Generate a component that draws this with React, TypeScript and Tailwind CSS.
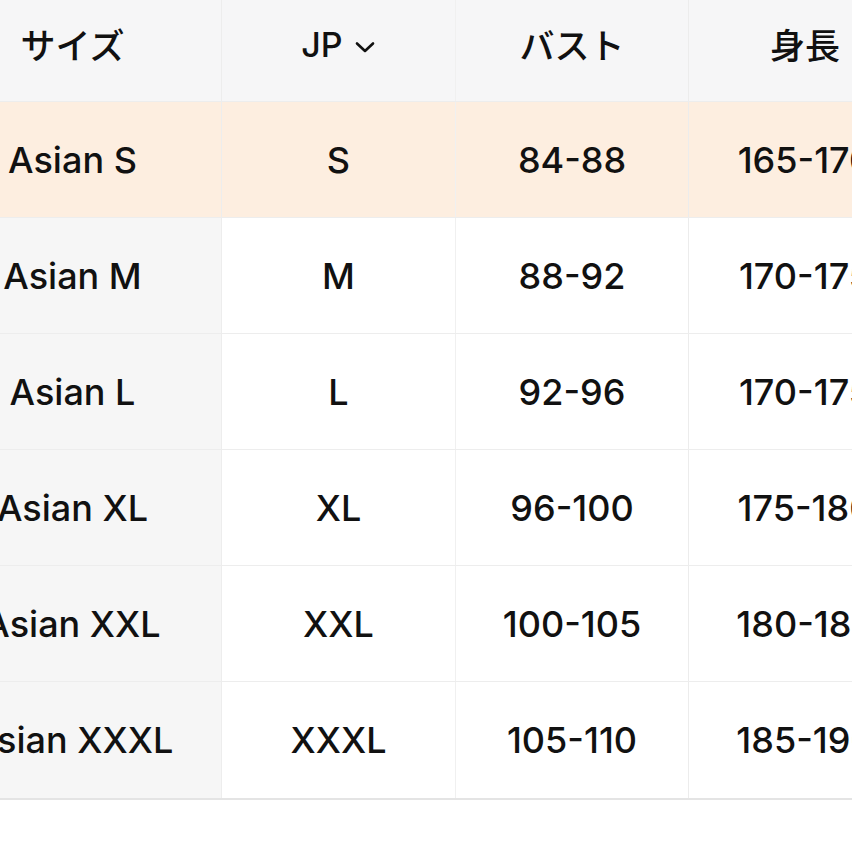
import React from 'react';

const rows = [
  { size: 'Asian S', jp: 'S', bust: '84-88', height: '165-170', active: true },
  { size: 'Asian M', jp: 'M', bust: '88-92', height: '170-175' },
  { size: 'Asian L', jp: 'L', bust: '92-96', height: '170-175' },
  { size: 'Asian XL', jp: 'XL', bust: '96-100', height: '175-180' },
  { size: 'Asian XXL', jp: 'XXL', bust: '100-105', height: '180-185' },
  { size: 'Asian XXXL', jp: 'XXXL', bust: '105-110', height: '185-190' },
];

function Chevron() {
  return (
    <svg width="22" height="14" viewBox="0 0 22 14" className="ml-[11px] mt-[4px]">
      <path d="M3 3.5 L11 11 L19 3.5" fill="none" stroke="#111" strokeWidth="2.6" strokeLinecap="round" strokeLinejoin="round" />
    </svg>
  );
}

export default function App() {
  return (
    <div className="w-[852px] h-[852px] overflow-hidden bg-white font-['Inter','Noto_Sans_CJK_JP',sans-serif] font-medium text-[#111]">
      <div className="ml-[-76px] w-[1005px] border-b-2 border-[#e4e4e4]">
        {/* header */}
        <div className="grid grid-cols-[298px_234px_233px_240px] h-[102px] bg-[#f6f6f7] border-b border-[#ededed]">
          <div className="flex items-center justify-center pb-[12px] text-[35px] border-r border-[#ededed] font-['Noto_Sans_CJK_JP',sans-serif]">サイズ</div>
          <div className="flex items-center justify-center pb-[12px] text-[34px] border-r border-[#f0f0f0]">
            JP<Chevron />
          </div>
          <div className="flex items-center justify-center pb-[12px] text-[35px] border-r border-[#ececec] font-['Noto_Sans_CJK_JP',sans-serif]">バスト</div>
          <div className="flex items-center justify-center pb-[12px] pr-[8px] text-[35px] font-['Noto_Sans_CJK_JP',sans-serif]">身長</div>
        </div>
        {rows.map((r, i) => (
          <div
            key={i}
            className={`grid grid-cols-[298px_234px_233px_240px] h-[116px] text-[36px] ${i < rows.length - 1 ? 'border-b border-[#ededed]' : ''} ${r.active ? 'bg-[#fdeee0]' : 'bg-white'}`}
          >
            <div className={`flex items-center justify-center border-r border-[#ededed] ${r.active ? '' : 'bg-[#f6f6f6]'}`}>{r.size}</div>
            <div className="flex items-center justify-center border-r border-[#f0f0f0]">{r.jp}</div>
            <div className="flex items-center justify-center border-r border-[#ececec]">{r.bust}</div>
            <div className="flex items-center justify-center pr-[8px]">{r.height}</div>
          </div>
        ))}
      </div>
    </div>
  );
}
